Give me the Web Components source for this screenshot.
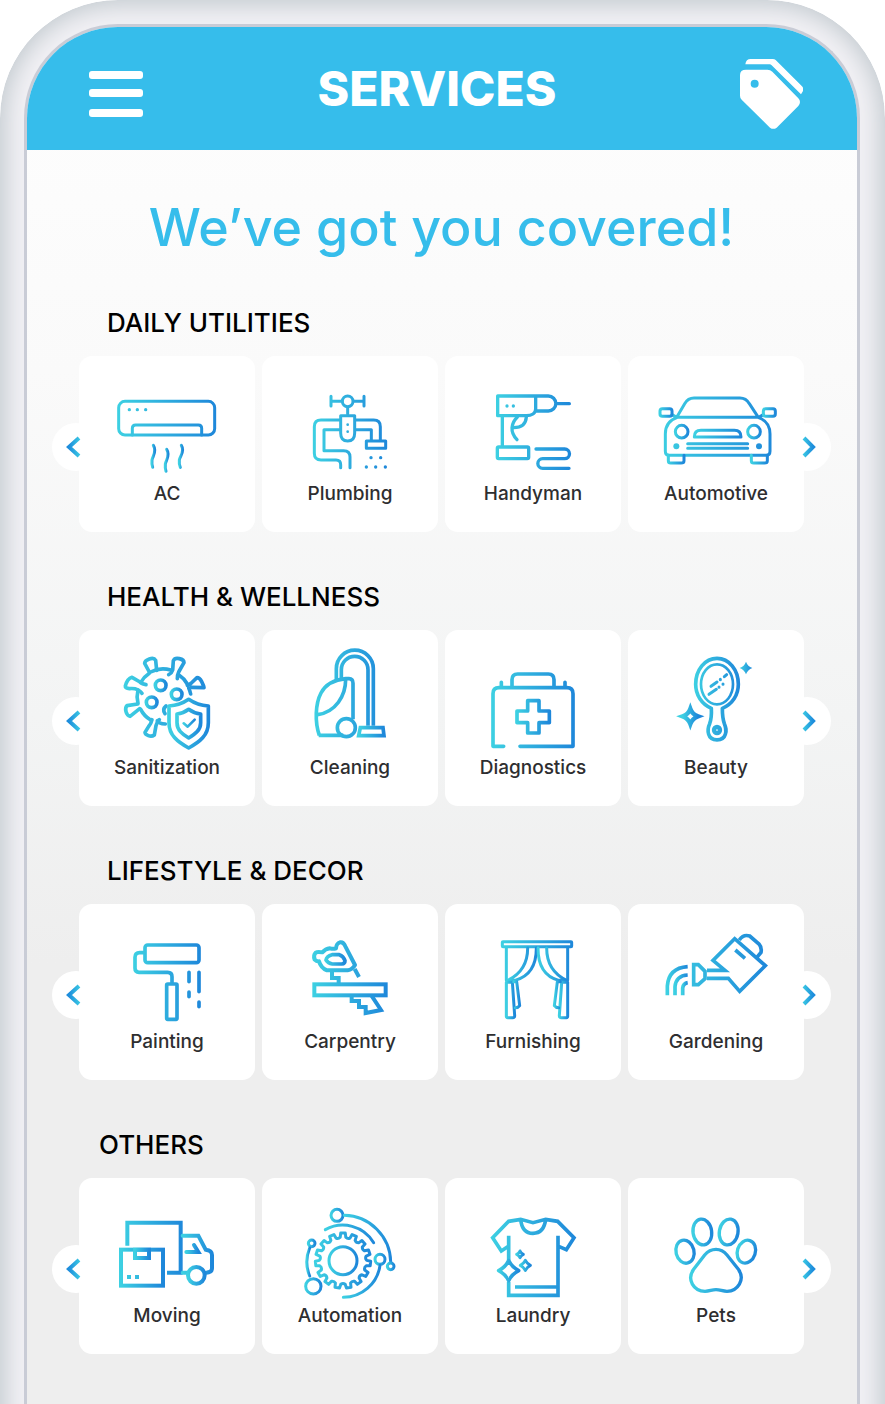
<!DOCTYPE html>
<html lang="en">
<head>
<meta charset="utf-8">
<meta name="viewport" content="width=device-width, initial-scale=1">
<title>Services</title>
<style>
  body { margin: 0; background: #fff; font-family: Inter, "Open Sans", sans-serif; }
</style>
</head>
<body>
<phone-frame>
  <app-header slot="header">SERVICES</app-header>
  <page-title>We’ve got you covered!</page-title>
  <service-section heading="DAILY UTILITIES">
    <service-card icon="ac">AC</service-card>
    <service-card icon="plumbing">Plumbing</service-card>
    <service-card icon="handyman">Handyman</service-card>
    <service-card icon="automotive">Automotive</service-card>
  </service-section>
  <service-section heading="HEALTH &amp; WELLNESS">
    <service-card icon="sanitization">Sanitization</service-card>
    <service-card icon="cleaning">Cleaning</service-card>
    <service-card icon="diagnostics">Diagnostics</service-card>
    <service-card icon="beauty">Beauty</service-card>
  </service-section>
  <service-section heading="LIFESTYLE &amp; DECOR">
    <service-card icon="painting">Painting</service-card>
    <service-card icon="carpentry">Carpentry</service-card>
    <service-card icon="furnishing">Furnishing</service-card>
    <service-card icon="gardening">Gardening</service-card>
  </service-section>
  <service-section heading="OTHERS" inset="narrow">
    <service-card icon="moving">Moving</service-card>
    <service-card icon="automation">Automation</service-card>
    <service-card icon="laundry">Laundry</service-card>
    <service-card icon="pets">Pets</service-card>
  </service-section>
</phone-frame>

<script>
const define = (name, html, setup) => {
  const template = document.createElement('template');
  template.innerHTML = html;
  customElements.define(name, class extends HTMLElement {
    constructor() {
      super();
      this.attachShadow({ mode: 'open' }).append(template.content.cloneNode(true));
    }
    connectedCallback() { if (setup) setup(this, this.shadowRoot); }
  });
};

// Toothed outline of the automation gear.
const gear = (cx, cy, root, tip, teeth) => {
  const step = Math.PI * 2 / teeth;
  const at = (r, a) => `${(cx + r * Math.sin(a)).toFixed(1)} ${(cy - r * Math.cos(a)).toFixed(1)}`;
  let d = '';
  for (let i = 0; i < teeth; i++) {
    const a = i * step;
    d += `${i ? 'L' : 'M'}${at(root, a - step * .28)}L${at(tip, a - step * .2)}L${at(tip, a + step * .2)}L${at(root, a + step * .28)}Q${at(root - 5, a + step * .5)} ${at(root, a + step * .72)}`;
  }
  return d + 'Z';
};
// Four-pointed sparkle with concave sides.
const star = (x, y, r, k = .26) => {
  const c = Math.round(r * k);
  return `M${x} ${y - r}Q${x + c} ${y - c} ${x + r} ${y}Q${x + c} ${y + c} ${x} ${y + r}Q${x - c} ${y + c} ${x - r} ${y}Q${x - c} ${y - c} ${x} ${y - r}Z`;
};
const dots = (r, ...pts) => '<g class="f">' + pts.map(([x, y]) => `<circle cx="${x}" cy="${y}" r="${r}"/>`).join('') + '</g>';

// box: origin of the card in drawing units; span: where the colour ramp starts and ends.
const ICONS = {
  ac: { box: [87, 17], span: [202, 498], art: `
    <rect x="206" y="153" width="288" height="101" rx="19"/><path d="M247 254v-20q0-10 10-10h188q10 0 10 10v20"/>
    <g class="own"><path d="M310 285c12 18-2 32-4 44-1 10 0 16 2 22"/><path d="M350 297c12 18-2 32-4 44-1 10 0 16 2 22"/><path d="M394 285c12 18-4 32-6 44-1 10 0 16 3 22"/></g>` + dots(5, [238,178],[262,178],[287,178]) },
  plumbing: { box: [636, 17], span: [789, 1011], art: `
    <circle cx="893" cy="153" r="16"/><path d="M876 153h-33M910 153h32M843 138v29M942 138v29M893 171v20"/>
    <path d="M872 196h42v52q0 24-21 24t-21-24z"/><path d="M868 209h-55q-20 0-20 20v80q0 20 20 20h45q14 0 14 14v9M868 238h-46v63h59q19 0 19 19v32M918 209h53q20 0 20 20v40M918 238h46v31"/>
    <rect x="949" y="272" width="58" height="22"/>` + dots(4, [893,223],[893,244]) + dots(5, [963,322],[992,322],[949,350],[977,350],[1006,350]) },
  handyman: { box: [9, 17], span: [162, 387], art: `
    <g stroke-width="10"><path d="M281 137H167v59h86c16 0 28-7 28-20zM281 137h38a22 22 0 0 1 0 45h-38M343 160h39M181 200v86"/>
    <path d="M226 200c-18 18-24 44-1 68M253 200q-2 32-38 32"/><rect x="166" y="290" width="94" height="35" rx="4"/>
    <path d="M282 296h86a14 14 0 0 1 0 29h-66a14 14 0 0 0 0 29h79"/></g>` + dots(5, [195,167],[214,167]) },
  automotive: { box: [559, 17], span: [652, 1005], art: `
    <path d="M707 198l22-38q10-17 28-17h138q18 0 28 17l25 38M704 201h248M691 193l14 8M965 193l-14 8M707 201q-36 12-36 50v52q0 12 12 12h290q12 0 12-12v-52q0-38-36-50"/>
    <g class="own"><rect x="655" y="175" width="36" height="23" rx="7"/><rect x="965" y="175" width="36" height="23" rx="7"/><circle cx="720" cy="244" r="19"/><circle cx="937" cy="244" r="19"/><path d="M758 260h140q0-20-20-20h-100q-20 0-20 20z"/><path d="M680 315v16q0 7 7 7h31q9 0 9-7v-16"/><path d="M929 315v16q0 7 7 7h32q9 0 9-7v-16"/></g>
    <path d="M738 280h180M738 294h180"/>` + dots(9, [704,288],[952,288]) },
  sanitization: { box: [87, 14], span: [222, 479], art: `
    <g stroke-width="11"><path d="M302 140A79 79 0 0 1 362 134M386 148A79 79 0 0 1 412 176M416 188Q420 196 422 206M298 144A79 79 0 0 0 272 172M264 194A79 79 0 0 0 264 234M272 252A79 79 0 0 0 302 284M322 286q4 9 24 10M348 242q-12 10-3 23"/>
    <path d="M298 140l-14-26q0-8 14-13t19 4l3 30M356 148q9-4 12-14l2-28q4-9 18-6t14 12l-16 28q-4 8-4 20M412 180q8-2 12-7l17-16q8 0 14 12t7 18l-38-1M288 178q-11-2-18-8l-24-14q-14 4-20 26-1 7 12 8 26-3 38 14M263 236l-32 5q-6 6-3 18t12 14l29-23M306 283q-3 13-10 20l-11 18q0 6 10 10t18-2l5-28q2-11 10-18"/></g>
    <g class="own" stroke-width="11"><circle cx="332" cy="180" r="16"/><circle cx="380" cy="207" r="16"/><circle cx="305" cy="231" r="16"/>
    <path d="M416 222q-26 18-59 20v50c0 38 26 58 59 76 33-18 59-38 59-76v-50q-33-2-59-20z"/><path d="M416 252q-16 12-35 14v26c0 22 15 34 35 46 20-12 36-24 36-46v-26q-20-2-36-14z"/><path d="M401 294l12 10 21-21" stroke-width="8"/></g>` },
  cleaning: { box: [636, 14], span: [794, 1006], art: `
    <g stroke-width="11" stroke-linecap="butt" stroke-linejoin="miter"><path d="M859 164v-34a55 55 0 0 1 111 0v171M874 160v-27a40 40 0 0 1 80 0v168"/>
    <path d="M808 330c-14-40-12-95 5-127 14-26 42-40 74-43h10q12 0 12 14v108M806 330h74M887 162c0 50-30 98-84 106"/><circle cx="889" cy="307" r="27"/></g>
    <g class="own"><path d="M931 307h68l3 24h-76z" stroke-width="11" stroke-linejoin="miter"/></g>` },
  diagnostics: { box: [9, 14], span: [148, 399], art: `
    <g stroke-width="11"><path d="M185 363h-32v-158q0-18 18-18h204q18 0 18 18v158H234M210 183v-20q0-17 17-17h92q17 0 17 17v20M178 181v-10M369 181v-10"/></g>
    <g class="own" stroke-width="11"><path d="M257 226h34v31h31v35h-31v31h-34v-31h-32v-35h32z"/></g>` },
  beauty: { box: [559, 14], span: [757, 895], art: `
    <path stroke-width="11" d="M809 249c-29-12-47-40-47-72 0-44 28-78 64-78s64 34 64 78c0 32-18 60-48 72 0 18 1 32 6 46 5 13 7 19 3 32-6 22-44 22-50 0-4-13-3-19 3-32 5-14 6-28 5-46z"/>
    <ellipse cx="826" cy="177" rx="48" ry="60" stroke-width="8"/><circle cx="826" cy="314" r="9" stroke-width="13"/>
    <path d="M808 183l18-13M836 162v1M848 154l7-6M802 207l22-15M832 185v1M844 176v1"/>
    <g class="own"><path d="${star(746,273,23)}" stroke-width="13" stroke-linejoin="miter"/></g><g class="ownf"><path d="${star(913,128,19)}"/></g>` },
  painting: { box: [87, 11], span: [250, 452], art: `
    <g stroke-width="11"><rect x="285" y="134" width="162" height="53" rx="8"/><path d="M281 157h-12q-14 0-14 14v33q0 12 12 12h86q13 0 13 13v18M417 216v28M417 275v14M447 216v58M447 305v14"/><rect x="350" y="251" width="31" height="106" rx="3"/></g>` },
  carpentry: { box: [636, 11], span: [788, 1012], art: `
    <g stroke-width="12"><path d="M858 144q-8 3-18 0-14 2-23 12-14-3-20 1-8 8-3 21 6 6 13 5 6 20 24 27h62q14-2 22-16l-29-56q-6-14-16-12-11 3-12 18z"/></g>
    <g class="own" stroke-width="11"><path d="M846 163h22q12 4 17 18 0 9-10 10h-28q-13-2-19-12 2-12 18-16z"/></g>
    <g stroke-width="12" stroke-linecap="butt" stroke-linejoin="miter"><path d="M846 215v18h20v18M914 206l13 24"/><rect x="793" y="252" width="214" height="33"/><path d="M905 282v20h22v18h20v18l46-9-29-44"/></g>` },
  furnishing: { box: [9, 11], span: [177, 393], art: `
    <rect x="181" y="124" width="208" height="15" rx="2"/><path d="M193 143v97M377 143v97"/>
    <g class="own"><path d="M257 143c0 50-24 80-60 97h22c46-12 64-48 64-97"/><path d="M314 143c0 50 24 80 60 97h-24c-46-12-62-48-62-97"/>
    <path d="M193 246h18l7 100q0 6-6 6h-15q-4 0-4-4z"/><path d="M377 246h-18l-7 100q0 6 6 6h15q4 0 4-4z"/><path d="M215 244h9l9 72q-4 6-13 6"/><path d="M355 244h-9l-9 72q4 6 13 6"/></g>` },
  gardening: { box: [559, 11], span: [671, 975], art: `
    <g stroke-width="11" stroke-linecap="butt" stroke-linejoin="miter"><path d="M796 210h54l-36-30 65-65 92 81-77 77-34-39h-64M881 149l29 25M893 119q12-18 31-12l28 24q9 10 6 25l-13 16"/>
    <path d="M756 193h14l20 20v22l-20 18h-14z"/></g>
    <g class="own" stroke-width="11" stroke-linecap="butt"><path d="M677 285v-28q4-54 61-58"/><path d="M700 285v-26q3-33 38-35"/><path d="M723 285v-22q2-14 15-16"/></g>` },
  moving: { box: [87, 28], span: [208, 400], art: `
    <g stroke-width="12" stroke-linecap="butt" stroke-linejoin="miter"><path d="M232 231v-69h160v150h-41"/></g>
    <g class="own" stroke-width="12" stroke-linejoin="miter"><path d="M398 201h47l22 42q19 2 19 16v40q0 12-17 13M414 312h-16"/><path d="M409 250h36l-13-21"/><circle cx="439" cy="320" r="25"/>
    <rect x="213" y="243" width="126" height="108"/><path d="M255 243v25h42v-25z"/></g>
    <g class="f"><path d="M231 319h12v12h-12zM255 319h12v12h-12z"/></g>` },
  automation: { box: [636, 28], span: [763, 1036], art: `
    <g class="own"><path d="${gear(879,276,71,83,15)}"/><circle cx="879" cy="276" r="42"/>
    <circle cx="861" cy="140" r="18"/><path d="M883 140a142 142 0 0 1 139 139"/><circle cx="1022" cy="293" r="10"/><path d="M826 183A108 108 0 0 1 971 222"/>
    <circle cx="990" cy="272" r="15"/><path d="M990 290A111 111 0 0 1 880 386"/><circle cx="785" cy="224" r="10"/><path d="M779 238A110 110 0 0 0 779 322"/><circle cx="790" cy="353" r="23"/></g>` },
  laundry: { box: [9, 28], span: [146, 401], art: `
    <g stroke-width="11" stroke-linecap="butt" stroke-linejoin="miter"><path d="M199 233l-21 14-26-40 48-49 36-6 37 10 38-10 36 6 49 49-23 36-23-10M236 152q4 42 37 42t38-42M200 201v74M200 340v40h148v-179M219 355h125"/></g>
    <g class="own"><path d="${star(200,306,30,.32)}" stroke-width="11"/><path d="${star(234,257,10,.32)}"/><path d="${star(250,290,15,.32)}"/></g>` },
  pets: { box: [559, 28], span: [698, 946], art: `
    <g class="own" stroke-width="10"><ellipse cx="782" cy="190" rx="28" ry="39" transform="rotate(-8 782 190)"/><ellipse cx="861" cy="190" rx="28" ry="39" transform="rotate(10 861 190)"/>
    <ellipse cx="730" cy="249" rx="27" ry="35" transform="rotate(-14 730 249)"/><ellipse cx="914" cy="249" rx="27" ry="35" transform="rotate(18 914 249)"/>
    <path d="M823 242q19 0 33 17l34 43c22 31-2 65-34 66-14 0-20-5-33-5s-19 5-33 5c-34-1-56-35-34-66l33-43q14-17 34-17z"/></g>` },
};

define('phone-frame', `
  <style>
    :host { display: block; }
    .bezel { box-sizing: border-box; min-height: 100vh; padding: 24px 25px 0 24px; border-radius: 118px 118px 0 0;
      background: #f2f1f5; clip-path: inset(0 round 118px 118px 0 0); display: flex; position: relative; }
    .bezel::before { content: ""; position: absolute; inset: 0 0 -60px; border-radius: inherit;
      box-shadow: inset 0 0 24px 5px #c1c9ce; }
    .screen { position: relative; flex: 1; min-width: 0; border: 3px solid #c9ccd6; border-bottom: 0; border-radius: 94px 94px 0 0;
      overflow: hidden; background: linear-gradient(#fefefe, #fafafa 25%, #f3f4f4 50%, #eee 68%); }
    main { padding: 48px 53px 48px 52px; display: flex; flex-direction: column; gap: 44px; }
  </style>
  <div class="bezel"><div class="screen"><slot name="header"></slot><main><slot></slot></main></div></div>`);

define('app-header', `
  <style>
    :host { display: block; background: #36bdeb; color: #fff; }
    header { display: flex; align-items: center; justify-content: space-between; height: 123px; padding: 0 54px 0 62px; }
    h1 { margin: 0; font-size: 48px; line-height: 60px; font-weight: 800; }
    button { border: 0; padding: 10px 0 0; background: none; color: inherit; display: flex; justify-content: flex-end; }
    .tags { width: 72px; }
    svg { display: block; fill: currentColor; }
  </style>
  <header>
    <button type="button" aria-label="Menu"><svg width="54" height="46" viewBox="0 0 54 46"><rect width="54" height="8" rx="3"/><rect y="18" width="54" height="8" rx="3"/><rect y="38" width="54" height="8" rx="3"/></svg></button>
    <h1><slot></slot></h1>
    <button class="tags" type="button" aria-label="Offers"><svg width="63" height="70" viewBox="893 174 189 210">
      <path d="M909 190q2-16 16-16h66q6 0 9 3l79 79q6 6 3 14l-6 10-88-87q-3-3-6-3z"/>
      <path fill-rule="evenodd" d="M911 206h64q9 0 15 6l78 80q10 11 0 23l-65 65q-10 7-20 0l-85-84q-5-4-5-12v-62q0-16 18-16zM937 236a12 12 0 1 0 0 24a12 12 0 1 0 0-24z"/></svg></button>
  </header>`);

define('page-title', `
  <style>
    :host { display: block; }
    h2 { margin: 0; text-align: center; color: #36bdeb; font-size: 52px; line-height: 60px; font-weight: 500; }
  </style>
  <h2><slot></slot></h2>`);

define('service-section', `
  <style>
    :host { display: block; --inset: 28px; }
    :host([inset="narrow"]) { --inset: 20px; }
    section { display: flex; flex-direction: column; gap: 12px; }
    h3 { margin: 0; padding-left: var(--inset); color: #000; font-size: 26px; line-height: 42px; font-weight: 500; }
    .row { position: relative; }
    .cards { display: grid; grid-template-columns: repeat(4, minmax(0, 1fr)); gap: 7px; }
    button { position: absolute; top: calc(50% - 21px); width: 48px; height: 48px; padding: 0; border: 0; border-radius: 50%; background: #fff;
      display: grid; place-items: center; }
    .prev { left: -27px; } .next { right: -27px; }
    svg { display: block; }
    path { fill: none; stroke: url(#g); stroke-width: 4; }
  </style>
  <section>
    <h3></h3>
    <div class="row">
      <div class="cards"><slot></slot></div>
      <button class="prev" type="button" aria-label="Previous"><svg width="20" height="22" viewBox="0 0 20 22"><defs><linearGradient id="g"><stop stop-color="#1e8ddc"/><stop offset="1" stop-color="#38c4e3"/></linearGradient></defs><path d="M13 2L3 11L13 20"/></svg></button>
      <button class="next" type="button" aria-label="Next"><svg width="20" height="22" viewBox="0 0 20 22"><defs><linearGradient id="g2"><stop stop-color="#38c4e3"/><stop offset="1" stop-color="#1e8ddc"/></linearGradient></defs><path style="stroke:url(#g2)" d="M7 2L16 11L7 20"/></svg></button>
    </div>
  </section>`, (host, root) => { root.querySelector('h3').textContent = host.getAttribute('heading'); });

define('service-card', `
  <style>
    :host { display: block; }
    a { display: flex; flex-direction: column; aspect-ratio: 1; border-radius: 13px; background: #fff; color: #2e2e30; text-decoration: none; }
    svg { display: block; width: 100%; overflow: visible; fill: none; stroke: url(#ramp); stroke-width: 9; stroke-linecap: round; stroke-linejoin: round; }
    .own > * { stroke: url(#own); }
    .f { fill: url(#ramp); stroke: none; }
    .ownf > * { fill: url(#own); stroke: none; }
    span { margin-top: 6px; text-align: center; font-size: 19px; line-height: 24px; font-weight: 500; }
  </style>
  <a href="#"><svg aria-hidden="true"></svg><span><slot></slot></span></a>`, (host, root) => {
  const { box, span, art } = ICONS[host.getAttribute('icon')];
  const svg = root.querySelector('svg');
  const stops = '<stop stop-color="#3dd0e2"/><stop offset="1" stop-color="#1e87da"/>';
  svg.setAttribute('viewBox', `${box[0]} ${box[1]} 528 360`);
  svg.innerHTML = `<defs><linearGradient id="ramp" gradientUnits="userSpaceOnUse" x1="${span[0]}" x2="${span[1]}" y1="0" y2="0">${stops}</linearGradient><linearGradient id="own">${stops}</linearGradient></defs>${art}`;
});
</script>
</body>
</html>
